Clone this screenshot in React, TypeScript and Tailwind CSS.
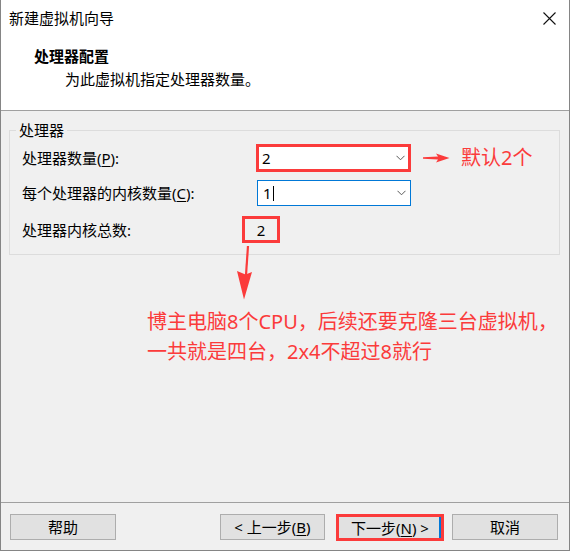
import React from "react";

const RED = "#fb3b3b";

function Chevron() {
  return (
    <svg width="9" height="6" viewBox="0 0 9 6" className="shrink-0">
      <path d="M0.5 0.8 L4.5 4.8 L8.5 0.8" fill="none" stroke="#5a5a5a" strokeWidth="1" />
    </svg>
  );
}

export default function App() {
  return (
    <div className="w-[570px] h-[551px] bg-[#f0f0f0] border-l border-r border-b border-[#858585] flex flex-col text-black font-['Noto_Sans','Noto_Sans_CJK_SC',sans-serif] text-[15px] overflow-hidden">
      {/* Header */}
      <div className="h-[111px] bg-white border-b border-[#a0a0a0] flex flex-col shrink-0">
        <div className="mt-[8px] h-[20px] pl-[8px] pr-[13px] flex items-center justify-between">
          <span className="leading-[20px]">新建虚拟机向导</span>
          <svg width="13" height="13" viewBox="0 0 13 13">
            <path d="M0.5 0.5 L12.5 12.5 M12.5 0.5 L0.5 12.5" stroke="#111" strokeWidth="1.1" />
          </svg>
        </div>
        <div className="mt-[18px] pl-[33px] leading-[20px] font-bold">处理器配置</div>
        <div className="mt-[3px] pl-[64px] leading-[20px]">为此虚拟机指定处理器数量。</div>
      </div>

      {/* Middle */}
      <div className="relative flex-1 flex flex-col">
        <div className="relative mt-[19px] ml-[8px] mr-[9px] border border-[#dcdcdc] pt-[13px] pb-[11px] pl-[12px]">
          <span className="absolute top-[-11px] left-[6px] px-[3px] bg-[#f0f0f0] leading-[20px]">处理器</span>

          <div className="h-[28px] flex items-center">
            <div className="w-[234px] leading-[20px]">
              处理器数量(<span className="underline underline-offset-2">P</span>):
            </div>
            <div className="w-[155px] h-[28px] bg-white flex items-center justify-between pl-[3px] pr-[3px] border-[3px]" style={{ borderColor: RED }}>
              <span className="leading-[20px]">2</span>
              <Chevron />
            </div>
            <svg width="27" height="12" viewBox="0 0 27 12" className="ml-[12px]">
              <polygon points="0,5.3 15,4.6 13,1.5 26.5,6 13,10.5 15,7.4 0,6.7" fill={RED} />
            </svg>
            <span className="ml-[11px] text-[20px] leading-[28px]" style={{ color: RED }}>默认2个</span>
          </div>

          <div className="mt-[8px] h-[26px] flex items-center">
            <div className="w-[235px] leading-[20px]">
              每个处理器的内核数量(<span className="underline underline-offset-2">C</span>):
            </div>
            <div className="w-[154px] h-[26px] bg-white border border-[#0078d7] flex items-center justify-between pl-[5px] pr-[4px]">
              <span className="flex items-center leading-[20px]">
                1<span className="inline-block w-px h-[15px] bg-black ml-[1px]" />
              </span>
              <Chevron />
            </div>
          </div>

          <div className="mt-[10px] h-[27px] flex items-center">
            <div className="w-[220px] leading-[20px]">处理器内核总数:</div>
            <div className="w-[38px] h-[27px] border-[3px] flex items-center justify-center leading-[20px]" style={{ borderColor: RED }}>
              2
            </div>
          </div>
        </div>

        <div className="pt-[52px] pl-[146px] text-[20px] leading-[30px] whitespace-nowrap" style={{ color: RED }}>
          <div>博主电脑8个CPU，后续还要克隆三台虚拟机，</div>
          <div>一共就是四台，2x4不超过8就行</div>
        </div>

        <svg width="17" height="56" viewBox="0 0 17 56" className="absolute left-[235px] top-[134px]">
          <path d="M12 1 L10 30" stroke={RED} strokeWidth="2.2" fill="none" />
          <polygon points="1,26 9.5,29.5 16,27 8,54.5" fill={RED} />
        </svg>
      </div>

      {/* Footer */}
      <div className="h-[48px] shrink-0 border-t border-[#a0a0a0] flex items-start pt-[11px] pl-[9px] pr-[11px]">
        <div className="w-[106px] h-[26px] bg-[#e1e1e1] border border-[#adadad] flex items-center justify-center leading-[20px]">
          帮助
        </div>
        <div className="ml-auto w-[105px] h-[26px] bg-[#e1e1e1] border border-[#adadad] flex items-center justify-center leading-[20px]">
          &lt; 上一步(<span className="underline underline-offset-2">B</span>)
        </div>
        <div className="ml-[11px] w-[108px] h-[27px] border-[3px] flex" style={{ borderColor: RED }}>
          <div className="flex-1 bg-[#e1e1e1] border-r-2 border-[#0078d7] flex items-center justify-center leading-[20px] pl-[2px]">
            下一步(<span className="underline underline-offset-2">N</span>) &gt;
          </div>
        </div>
        <div className="ml-[8px] w-[106px] h-[26px] bg-[#e1e1e1] border border-[#adadad] flex items-center justify-center leading-[20px]">
          取消
        </div>
      </div>
    </div>
  );
}
